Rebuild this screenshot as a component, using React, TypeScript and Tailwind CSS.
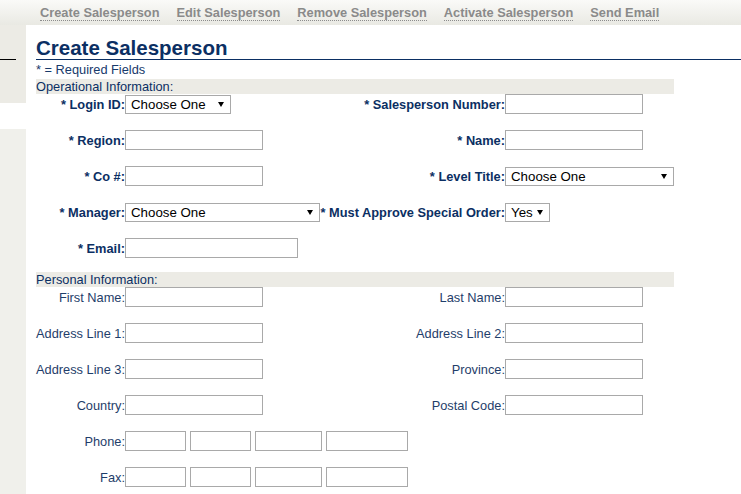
import React from 'react'

const navItems = ['Create Salesperson', 'Edit Salesperson', 'Remove Salesperson', 'Activate Salesperson', 'Send Email']

function TextBox({ className }: { className: string }) {
    return <input type="text" className={`h-[20px] border border-[#a9a9a9] bg-white outline-none ${className}`} />
}

function Select({ value, className }: { value: string; className: string }) {
    return (
        <div className={`flex h-[19px] items-center justify-between gap-[4px] self-center border border-[#a9a9a9] bg-white pl-[5px] pr-[6px] pt-px text-[13.3px] leading-none text-black ${className}`}>
            <span>{value}</span>
            <svg width="6" height="5" viewBox="0 0 6 5" className="shrink-0">
                <polygon points="0,0 6,0 3,5" fill="#000" />
            </svg>
        </div>
    )
}

function Label({ text, bold = false }: { text: string; bold?: boolean }) {
    return (
        <div className={`flex items-center justify-end whitespace-nowrap pt-px ${bold ? 'font-bold text-[#0b2f63]' : 'text-[#1f3e6a]'}`}>
            {text}
        </div>
    )
}

export default function App() {
    return (
        <div className="flex min-h-[494px] flex-col bg-white font-['Liberation_Sans',Arial,sans-serif] text-[12.8px]">
            {/* top nav */}
            <div className="flex h-[25px] gap-[17px] bg-gradient-to-b from-[#fafaf8] to-[#e9e9e3] pl-[40px] pt-[5px]">
                {navItems.map((item) => (
                    <span key={item} className="h-[16px] border-b border-dotted border-[#8c8c8c] font-bold leading-[15px] text-[#8a8a8a]">
                        {item}
                    </span>
                ))}
            </div>

            <div className="flex flex-1">
                {/* left rail */}
                <div className="flex w-[26px] shrink-0 flex-col">
                    <div className="h-[34px] bg-[#ecebe5]" />
                    <div className="h-px w-full bg-[#ecebe5]">
                        <div className="h-px w-[16px] bg-black" />
                    </div>
                    <div className="h-[43px] bg-[#ecebe5]" />
                    <div className="h-[26px] bg-white" />
                    <div className="flex-1 bg-[#f0f0eb]" />
                </div>

                {/* main */}
                <div className="flex-1 pl-[10px] pb-[10px]">
                    <h1 className="mt-[11px] border-b border-[#0b2f63] text-[20.5px] font-bold leading-[23px] text-[#0b2f63]">
                        Create Salesperson
                    </h1>
                    <div className="py-[2px] leading-[15px] text-[#173a6b]">* = Required Fields</div>

                    <div className="h-[15px] w-[638px] bg-[#ecebe5] leading-[15px] text-[#0b2f63]">Operational Information:</div>
                    <div className="grid w-[638px] grid-cols-[89px_195px_185px_169px] auto-rows-[20px] gap-y-[16px]">
                        <Label bold text="* Login ID:" />
                        <Select value="Choose One" className="w-[106px]" />
                        <Label bold text="* Salesperson Number:" />
                        <TextBox className="w-[138px]" />

                        <Label bold text="* Region:" />
                        <TextBox className="w-[138px]" />
                        <Label bold text="* Name:" />
                        <TextBox className="w-[138px]" />

                        <Label bold text="* Co #:" />
                        <TextBox className="w-[138px]" />
                        <Label bold text="* Level Title:" />
                        <Select value="Choose One" className="w-[169px]" />

                        <Label bold text="* Manager:" />
                        <Select value="Choose One" className="w-[195px]" />
                        <Label bold text="* Must Approve Special Order:" />
                        <Select value="Yes" className="w-[45px]" />

                        <Label bold text="* Email:" />
                        <TextBox className="w-[173px]" />
                    </div>

                    <div className="mt-[14px] h-[15px] w-[638px] bg-[#ecebe5] leading-[15px] text-[#0b2f63]">Personal Information:</div>
                    <div className="grid w-[638px] grid-cols-[89px_195px_185px_169px] auto-rows-[20px] gap-y-[16px]">
                        <Label text="First Name:" />
                        <TextBox className="w-[138px]" />
                        <Label text="Last Name:" />
                        <TextBox className="w-[138px]" />

                        <Label text="Address Line 1:" />
                        <TextBox className="w-[138px]" />
                        <Label text="Address Line 2:" />
                        <TextBox className="w-[138px]" />

                        <Label text="Address Line 3:" />
                        <TextBox className="w-[138px]" />
                        <Label text="Province:" />
                        <TextBox className="w-[138px]" />

                        <Label text="Country:" />
                        <TextBox className="w-[138px]" />
                        <Label text="Postal Code:" />
                        <TextBox className="w-[138px]" />

                        <Label text="Phone:" />
                        <div className="col-span-3 flex gap-[4px]">
                            <TextBox className="w-[61px]" />
                            <TextBox className="w-[61px]" />
                            <TextBox className="w-[67px]" />
                            <TextBox className="w-[82px]" />
                        </div>

                        <Label text="Fax:" />
                        <div className="col-span-3 flex gap-[4px]">
                            <TextBox className="w-[61px]" />
                            <TextBox className="w-[61px]" />
                            <TextBox className="w-[67px]" />
                            <TextBox className="w-[82px]" />
                        </div>
                    </div>
                </div>
            </div>
        </div>
    )
}
